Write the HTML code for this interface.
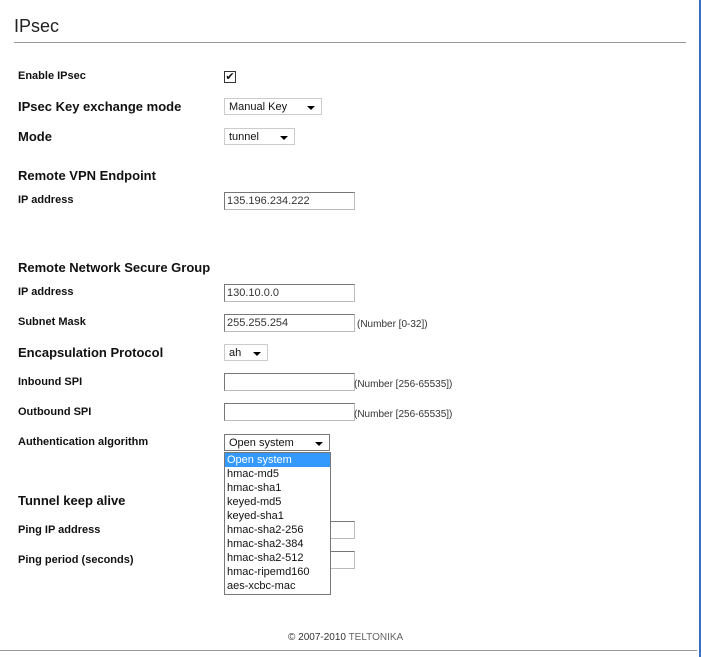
<!DOCTYPE html>
<html><head><style>
body{margin:0;width:701px;height:657px;background:#fff;position:relative;overflow:hidden;font-family:"Liberation Sans",Arial,sans-serif;color:#111}
.a{position:absolute;white-space:nowrap}
.s{font-size:11px;font-weight:bold}
.b{font-size:13px;font-weight:bold}
.in{position:absolute;width:127px;height:16px;border:1px solid #bbb;border-top-color:#777;border-left-color:#777;font-size:11px;line-height:16px;padding-left:2px;box-sizing:content-box;color:#333}
.sel{position:absolute;height:17px;border:1px solid #ccc;font-size:11px;line-height:17px;padding-left:4px;box-sizing:border-box;background:#fff}
.sel:after{content:"";position:absolute;right:6px;top:7px;border-left:4px solid transparent;border-right:4px solid transparent;border-top:4px solid #000}
.n{font-size:10px;color:#333}
.dd{position:absolute;left:224px;top:452px;width:107px;height:143px;border:1px solid #777;box-sizing:border-box;background:#fff;font-size:11px}
.dd div{height:14px;line-height:14px;padding-left:2px}
</style></head><body>
<div class="a" style="right:0;top:0;width:2px;height:657px;background:#3a6fc4"></div>
<div class="a" style="left:0;top:650px;width:697px;height:1px;background:#999"></div>
<div class="a" style="left:14px;top:16px;font-size:18px;color:#222">IPsec</div>
<div class="a" style="left:14px;top:42px;width:672px;height:1px;background:#999"></div>

<div class="a s" style="left:18px;top:70px">Enable IPsec</div>
<div class="a" style="left:224px;top:71px;width:10px;height:10px;border:1px solid #333;font-size:11px;line-height:10px;text-align:center">✔</div>
<div class="a b" style="left:18px;top:99px">IPsec Key exchange mode</div>
<div class="sel" style="left:224px;top:98px;width:98px">Manual Key</div>
<div class="a b" style="left:18px;top:129px">Mode</div>
<div class="sel" style="left:224px;top:128px;width:71px">tunnel</div>

<div class="a b" style="left:18px;top:168px">Remote VPN Endpoint</div>
<div class="a s" style="left:18px;top:194px">IP address</div>
<div class="in" style="left:224px;top:192px">135.196.234.222</div>

<div class="a b" style="left:18px;top:260px">Remote Network Secure Group</div>
<div class="a s" style="left:18px;top:286px">IP address</div>
<div class="in" style="left:224px;top:284px">130.10.0.0</div>
<div class="a s" style="left:18px;top:316px">Subnet Mask</div>
<div class="in" style="left:224px;top:314px">255.255.254</div>
<div class="a n" style="left:357px;top:319px">(Number [0-32])</div>
<div class="a b" style="left:18px;top:345px">Encapsulation Protocol</div>
<div class="sel" style="left:224px;top:344px;width:44px">ah</div>
<div class="a s" style="left:18px;top:376px">Inbound SPI</div>
<div class="in" style="left:224px;top:373px"></div>
<div class="a n" style="left:354px;top:379px">(Number [256-65535])</div>
<div class="a s" style="left:18px;top:406px">Outbound SPI</div>
<div class="in" style="left:224px;top:403px"></div>
<div class="a n" style="left:354px;top:409px">(Number [256-65535])</div>
<div class="a s" style="left:18px;top:436px">Authentication algorithm</div>
<div class="sel" style="left:224px;top:434px;width:106px;border-color:#777">Open system</div>

<div class="a b" style="left:18px;top:493px">Tunnel keep alive</div>
<div class="a s" style="left:18px;top:524px">Ping IP address</div>
<div class="in" style="left:224px;top:521px"></div>
<div class="a s" style="left:18px;top:554px">Ping period (seconds)</div>
<div class="in" style="left:224px;top:551px"></div>

<div class="dd">
<div style="background:#3399ff;color:#fff">Open system</div>
<div>hmac-md5</div><div>hmac-sha1</div><div>keyed-md5</div><div>keyed-sha1</div>
<div>hmac-sha2-256</div><div>hmac-sha2-384</div><div>hmac-sha2-512</div><div>hmac-ripemd160</div><div>aes-xcbc-mac</div>
</div>

<div class="a" style="left:288px;top:632px;font-size:10px;color:#333">© 2007-2010 <span style="color:#666">TELTONIKA</span></div>
</body></html>
